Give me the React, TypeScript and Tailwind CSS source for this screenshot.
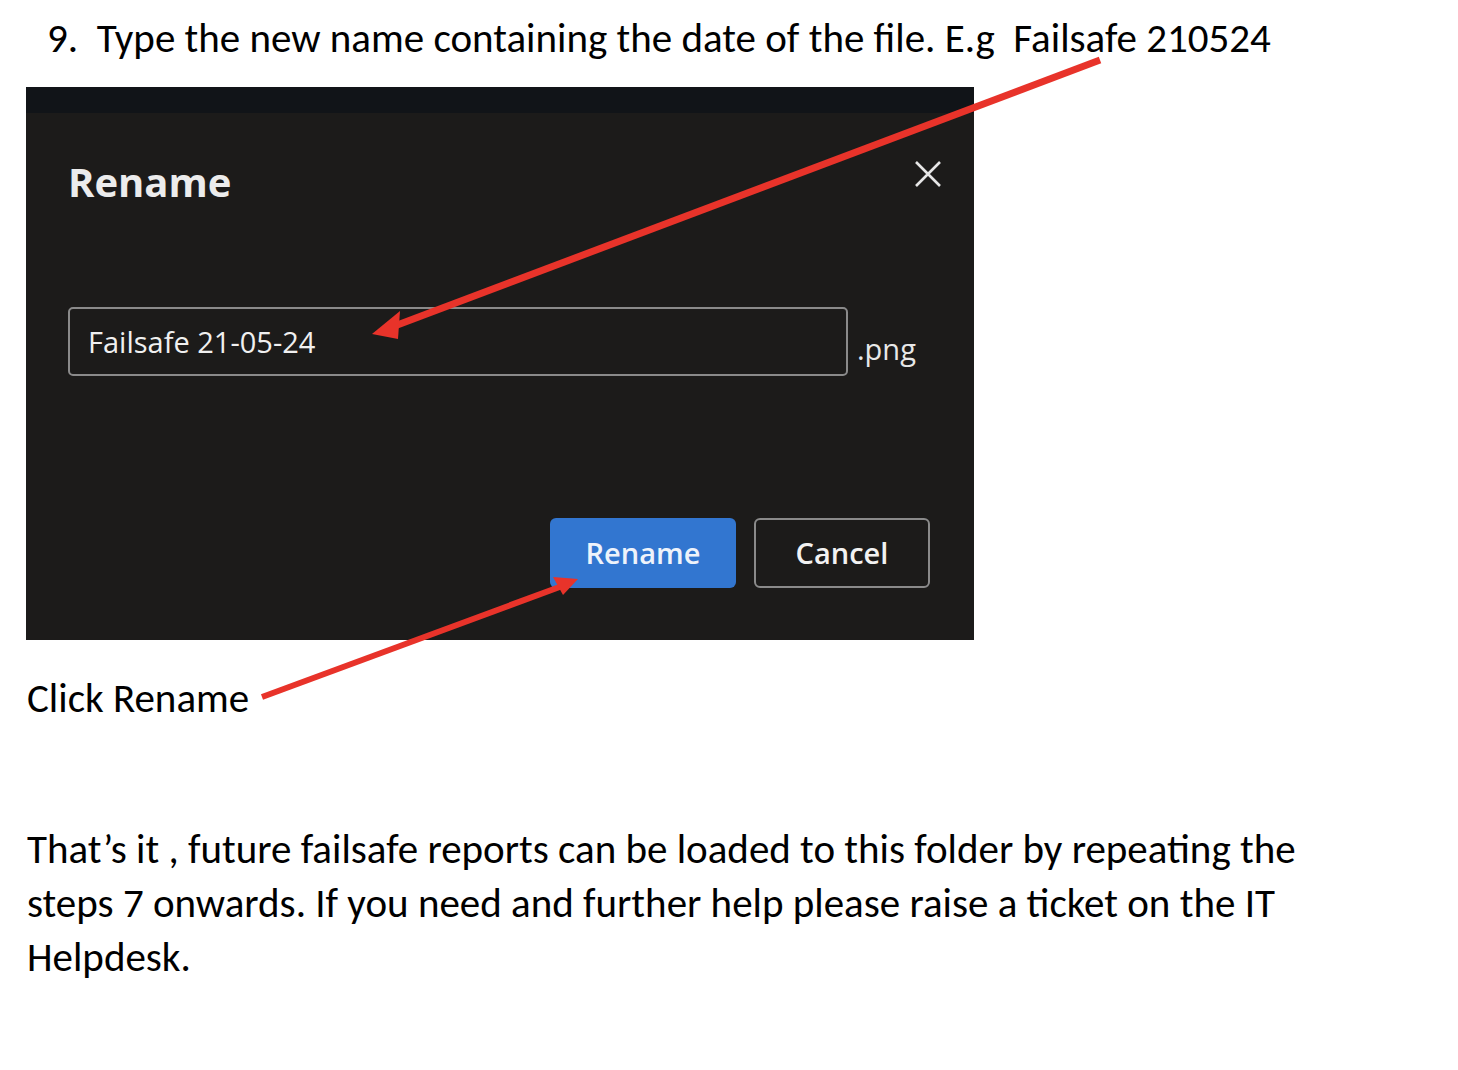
import React from "react";

const docFont = { fontFamily: "Carlito, Lato, 'Liberation Sans', sans-serif" };
const uiFont = { fontFamily: "'Open Sans', 'Noto Sans', sans-serif" };

function Arrows() {
    return (
        <svg
            className="absolute inset-0 pointer-events-none"
            width="1458"
            height="1070"
            viewBox="0 0 1458 1070"
        >
            <line x1="1100" y1="60" x2="392" y2="327" stroke="#e8332a" strokeWidth="7" />
            <polygon points="372,334 400,311 398,339" fill="#e8332a" />
            <line x1="262" y1="697" x2="565" y2="585" stroke="#e8332a" strokeWidth="6" />
            <polygon points="578,579 553,577 563,595" fill="#e8332a" />
        </svg>
    );
}

function RenameDialog() {
    return (
        <div className="w-[948px] h-[553px] bg-[#1c1b1a] flex flex-col" style={uiFont}>
            <div className="h-[26px] bg-[#111418]" />
            <div className="flex justify-between pl-[42px] pr-[32px] pt-[49px]">
                <h2 className="text-[40px] leading-none font-bold text-[#ececec]">Rename</h2>
                <svg width="28" height="28" viewBox="0 0 28 28" className="mt-[-2px]">
                    <path d="M2 2 L26 26 M26 2 L2 26" stroke="#e6e6e6" strokeWidth="2.6" />
                </svg>
            </div>
            <div className="flex items-end pl-[42px] pt-[105px]">
                <div className="w-[780px] h-[69px] border-2 border-[#8a8a8a] rounded-[5px] flex items-center px-[18px]">
                    <span className="text-[29px] text-[#f0f0f0]">Failsafe 21-05-24</span>
                </div>
                <span className="text-[29px] text-[#e8e8e8] ml-[9px] mb-[6px]">.png</span>
            </div>
            <div className="flex justify-end gap-[18px] pr-[44px] pt-[142px]">
                <button className="w-[186px] h-[70px] bg-[#3276d0] rounded-[6px] text-[29px] font-semibold text-[#eef3fb]">
                    Rename
                </button>
                <button className="w-[176px] h-[70px] border-2 border-[#8a8a8a] rounded-[6px] text-[29px] font-semibold text-[#f2f2f2]">
                    Cancel
                </button>
            </div>
        </div>
    );
}

export default function App() {
    return (
        <div className="relative w-[1458px] h-[1070px] bg-white text-black overflow-hidden" style={docFont}>
            <div className="pl-[47px] pt-[14px] text-[41px] leading-[48px]">
                9.&nbsp;&nbsp;Type the new name containing the date of the file. E.g&nbsp; Failsafe 210524
            </div>
            <div className="pl-[26px] pt-[25px]">
                <RenameDialog />
            </div>
            <div className="pl-[27px] pt-[34px] text-[41px] leading-[48px]">Click Rename</div>
            <div className="pl-[27px] pt-[100px] text-[41px] leading-[54px] w-[1400px]">
                That’s it , future failsafe reports can be loaded to this folder by repeating the
                <br />
                steps 7 onwards. If you need and further help please raise a ticket on the IT
                <br />
                Helpdesk.
            </div>
            <Arrows />
        </div>
    );
}
